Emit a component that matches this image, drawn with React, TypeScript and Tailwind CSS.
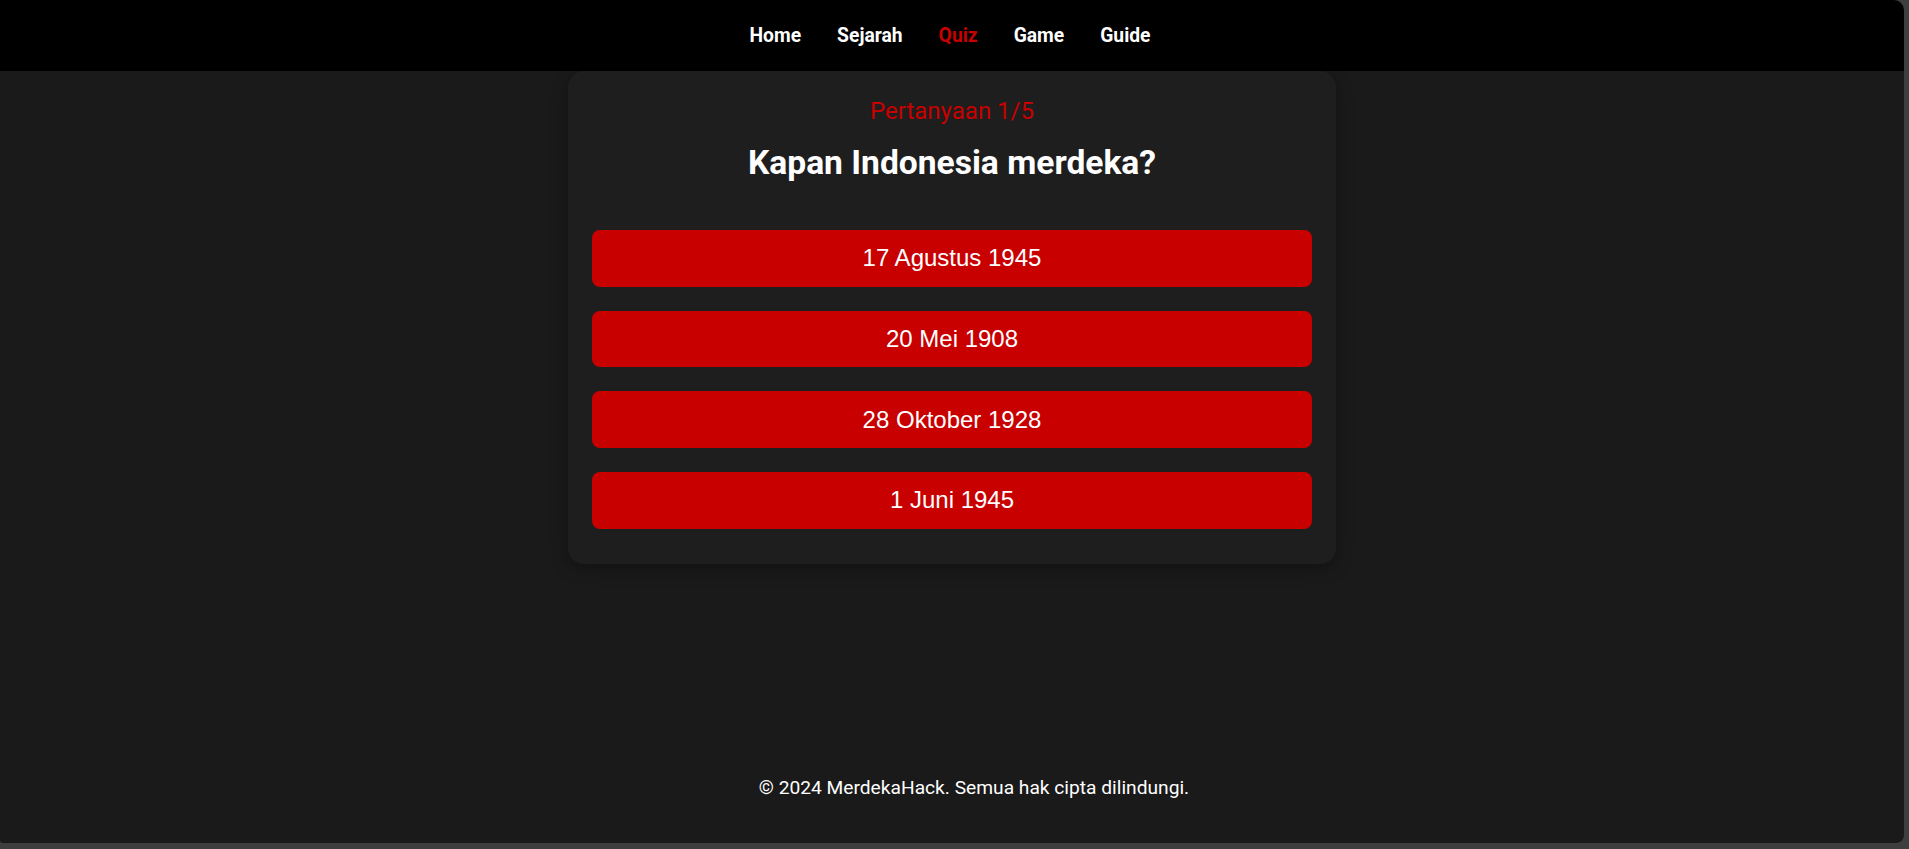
import { FC } from 'react'

const navLinks = ['Home', 'Sejarah', 'Quiz', 'Game', 'Guide']

const options = ['17 Agustus 1945', '20 Mei 1908', '28 Oktober 1928', '1 Juni 1945']

const Navbar: FC = () => (
  <nav className="h-[71px] bg-black flex items-center justify-center gap-[36px] pr-[4px] rounded-tr-[10px]">
    {navLinks.map((link) => (
      <a
        key={link}
        href="#"
        className={`text-[19.3px] font-bold leading-none ${link === 'Quiz' ? 'text-[#c80000]' : 'text-white'}`}
      >
        {link}
      </a>
    ))}
  </nav>
)

const QuizCard: FC = () => (
  <div className="w-[768px] mx-auto bg-[#1e1e1e] rounded-2xl shadow-[0_4px_16px_rgba(0,0,0,0.35)] px-6 pt-[26px] pb-[35px] text-center">
    <p className="text-[24px] leading-[28px] text-[#c80000]">Pertanyaan 1/5</p>
    <h1 className="mt-[17.8px] text-[33.6px] leading-[39.3px] font-bold text-white">Kapan Indonesia merdeka?</h1>
    <div className="mt-[47.9px] flex flex-col gap-6">
      {options.map((opt) => (
        <button
          key={opt}
          className="h-[56.7px] w-full rounded-lg bg-[#c80000] text-white text-[24px] font-['Liberation_Sans',Arial,sans-serif]"
        >
          {opt}
        </button>
      ))}
    </div>
  </div>
)

export default function App() {
  return (
    <div className="h-screen bg-[#3e3e3e] font-['Roboto',sans-serif]">
      <div className="w-[1904px] h-[843px] bg-[#1a1a1a] rounded-tr-[10px] rounded-br-[8px] rounded-bl-[3px] flex flex-col overflow-hidden">
        <Navbar />
        <main className="flex-1">
          <QuizCard />
        </main>
        <footer className="pt-6 pb-[40.2px] pl-[44px] text-center">
          <p className="text-[19.2px] text-white">© 2024 MerdekaHack. Semua hak cipta dilindungi.</p>
        </footer>
      </div>
    </div>
  )
}
